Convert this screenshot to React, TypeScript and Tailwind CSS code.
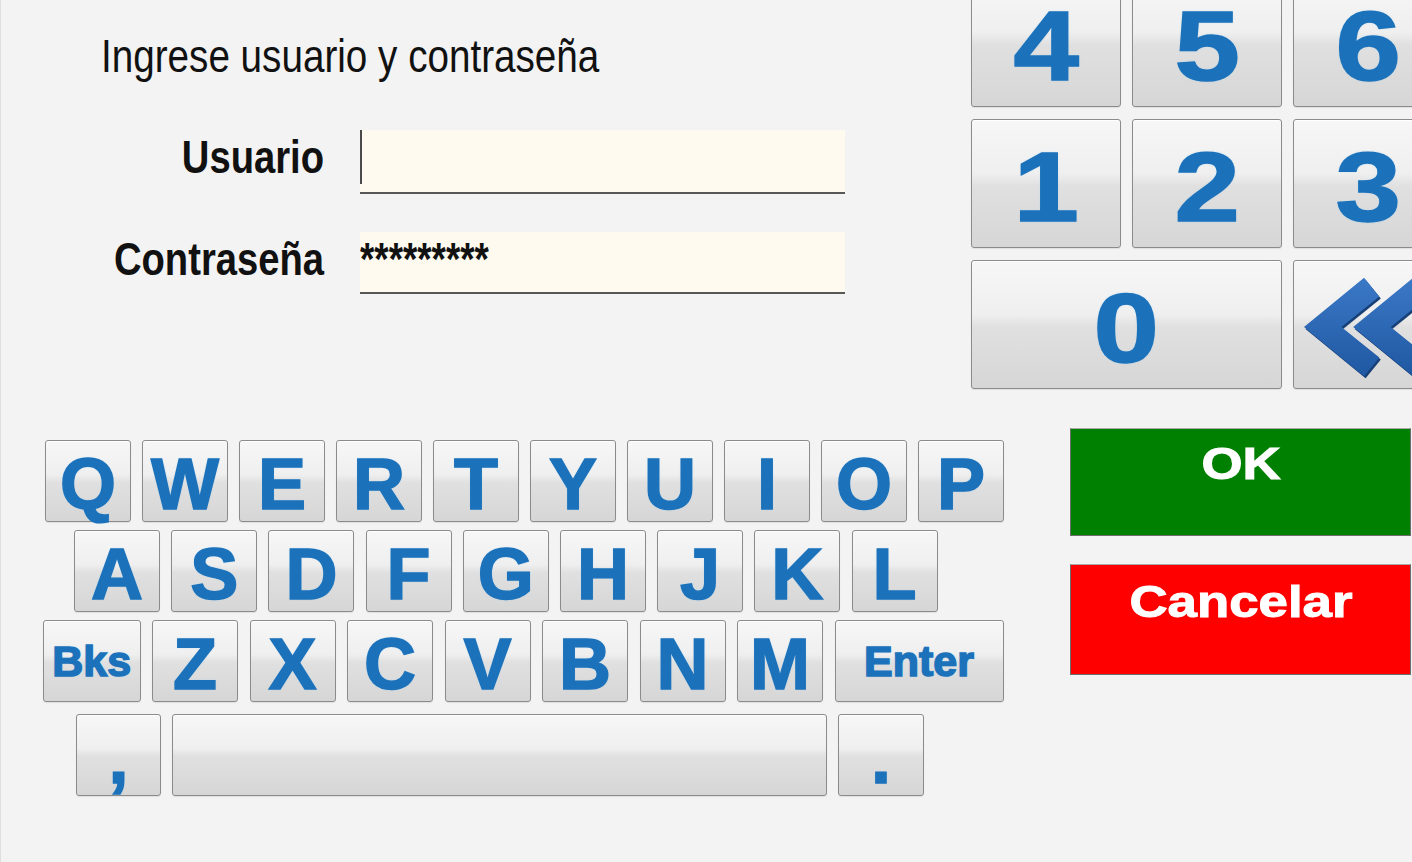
import React from "react";

const KEY =
  "flex shrink-0 items-center justify-center rounded-[3px] border border-[#8b8b8b] bg-[linear-gradient(to_bottom,#f7f7f7_0%,#efefef_42%,#e0e0e0_52%,#d6d6d6_100%)] shadow-[inset_0_1px_0_#ffffff,0_1px_1px_rgba(0,0,0,0.08)]";
const GLYPH =
  "font-bold leading-none text-[#1c72ba] [-webkit-text-stroke:1.5px_#1c72ba] [text-shadow:0_0_2px_rgba(140,200,245,0.9)]";

function Letter({ ch }: { ch: string }) {
  return (
    <div className={`${KEY} h-[82px] w-[86px]`}>
      <span className={`${GLYPH} translate-y-[3px] text-[72px]`}>{ch}</span>
    </div>
  );
}

function NumKey({ ch, wide }: { ch: string; wide?: boolean }) {
  return (
    <div className={`${KEY} h-[129px] ${wide ? "col-span-2" : ""}`}>
      <span className={`${GLYPH} inline-block translate-y-[3px] scale-x-[1.2] text-[98px] !leading-[80px]`}>{ch}</span>
    </div>
  );
}

function BackIcon() {
  return (
    <svg viewBox="0 0 150 129" className="h-full w-full">
      <defs>
        <linearGradient id="chev" x1="0" y1="0" x2="0" y2="1">
          <stop offset="0%" stopColor="#3b78c6" />
          <stop offset="100%" stopColor="#1f58a2" />
        </linearGradient>
      </defs>
      {[0, 50].map((dx) => (
        <g key={dx} transform={`translate(${dx} 0)`}>
          <polygon
            points="13,70 73,21 87.5,38.8 49.4,70 87.5,101.2 73,119"
            fill="#9aa4b0"
            opacity="0.45"
          />
          <polygon
            points="10,67 71,17 86.5,36 48,67 86.5,98 71,117"
            fill="#163f78"
            transform="translate(1.5 2)"
          />
          <polygon
            points="10,67 71,17 86.5,36 48,67 86.5,98 71,117"
            fill="url(#chev)"
          />
        </g>
      ))}
    </svg>
  );
}

export default function App() {
  const row1 = ["Q", "W", "E", "R", "T", "Y", "U", "I", "O", "P"];
  const row2 = ["A", "S", "D", "F", "G", "H", "J", "K", "L"];
  const row3 = ["Z", "X", "C", "V", "B", "N", "M"];

  return (
    <div className="flex h-[862px] w-[1412px] overflow-hidden border-l border-[#dedede] bg-[#f3f3f3] [font-family:'Liberation_Sans',Arial,Helvetica,sans-serif]">
      {/* Left column */}
      <div className="flex w-[970px] shrink-0 flex-col">
        <div className="ml-[100px] mt-[33px] h-[46px] origin-left scale-x-[0.84] whitespace-nowrap text-[46px] leading-none text-[#111]">
          Ingrese usuario y contraseña
        </div>

        <div className="mt-[51px] flex items-start">
          <div className="w-[323px] origin-right scale-x-[0.83] pt-[4px] text-right text-[46px] font-bold leading-none text-[#111]">
            Usuario
          </div>
          <div className="ml-[36px] flex h-[64px] w-[485px] items-start border-b-2 border-[#575757] bg-[#fffaf0]">
            <div className="h-[54px] w-[2px] bg-[#4a4a4a]" />
          </div>
        </div>

        <div className="mt-[38px] flex items-start">
          <div className="w-[323px] origin-right scale-x-[0.83] pt-[4px] text-right text-[46px] font-bold leading-none text-[#111]">
            Contraseña
          </div>
          <div className="ml-[36px] h-[62px] w-[485px] border-b-2 border-[#575757] bg-[#fffaf0]">
            <div className="origin-left scale-x-[0.8] pt-[4px] text-[46px] font-bold leading-none text-[#111]">
              *********
            </div>
          </div>
        </div>

        {/* Keyboard */}
        <div className="mt-[146px] flex flex-col">
          <div className="ml-[44px] flex h-[82px] gap-[11px]">
            {row1.map((k) => (
              <Letter key={k} ch={k} />
            ))}
          </div>
          <div className="ml-[73px] mt-[8px] flex h-[82px] gap-[11.2px]">
            {row2.map((k) => (
              <Letter key={k} ch={k} />
            ))}
          </div>
          <div className="ml-[42px] mt-[8px] flex h-[82px] gap-[11.5px]">
            <div className={`${KEY} h-[82px] w-[97.5px]`}>
              <span className={`${GLYPH} text-[43px]`}>Bks</span>
            </div>
            {row3.map((k) => (
              <Letter key={k} ch={k} />
            ))}
            <div className={`${KEY} h-[82px] w-[169px]`}>
              <span className={`${GLYPH} text-[43px]`}>Enter</span>
            </div>
          </div>
          <div className="ml-[75px] mt-[12px] flex h-[82px] gap-[11px]">
            <div className={`${KEY} h-[82px] w-[85px]`}>
              <span className={`${GLYPH} translate-y-[3px] text-[72px]`}>,</span>
            </div>
            <div className={`${KEY} h-[82px] w-[655px]`} />
            <div className={`${KEY} h-[82px] w-[86px]`}>
              <span className={`${GLYPH} translate-y-[3px] text-[72px]`}>.</span>
            </div>
          </div>
        </div>
      </div>

      {/* Right column */}
      <div className="flex shrink-0 flex-col">
        <div className="-mt-[22px] grid grid-cols-[150px_150px_150px] gap-x-[11px] gap-y-[12px]">
          <NumKey ch="4" />
          <NumKey ch="5" />
          <NumKey ch="6" />
          <NumKey ch="1" />
          <NumKey ch="2" />
          <NumKey ch="3" />
          <NumKey ch="0" wide />
          <div className={`${KEY} h-[129px] overflow-hidden`}>
            <BackIcon />
          </div>
        </div>

        <div className="ml-[99px] mt-[39px] flex h-[108px] w-[341px] items-start justify-center border border-[#6e6e6e] border-t-[#a9a9a9] bg-[#008000] pt-[13px]">
          <span className="inline-block scale-x-[1.2] text-[44px] font-bold leading-none text-white [-webkit-text-stroke:1px_#ffffff]">OK</span>
        </div>
        <div className="ml-[99px] mt-[28px] flex h-[111px] w-[341px] items-start justify-center border border-[#6e6e6e] border-t-[#a9a9a9] bg-[#ff0000] pt-[15px]">
          <span className="inline-block scale-x-[1.2] text-[44px] font-bold leading-none text-white [-webkit-text-stroke:1px_#ffffff]">Cancelar</span>
        </div>
      </div>
    </div>
  );
}
